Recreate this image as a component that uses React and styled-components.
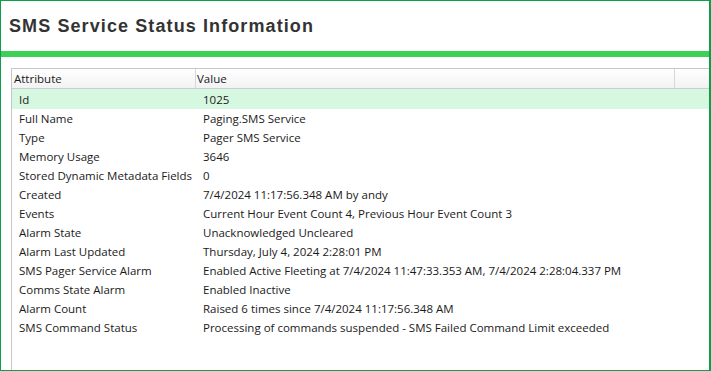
import React from "react";
import styled, { createGlobalStyle } from "styled-components";

const Global = createGlobalStyle`
  html, body {
    margin: 0;
    padding: 0;
    background: #fff;
  }
`;

const Window = styled.div`
  width: 711px;
  height: 371px;
  box-sizing: border-box;
  border: 1px solid #0aa04a;
  border-right-width: 2px;
  background: #fff;
  display: flex;
  flex-direction: column;
  overflow: hidden;
`;

const Header = styled.div`
  height: 50px;
  box-sizing: border-box;
  padding: 15px 0 0 8px;
`;

const Title = styled.h1`
  margin: 0;
  font-family: "Liberation Sans", Arial, sans-serif;
  font-size: 18px;
  line-height: 20px;
  font-weight: bold;
  letter-spacing: 1.1px;
  color: #333;
`;

const Bar = styled.div`
  height: 6px;
  background: #3ecf57;
`;

const Table = styled.div`
  flex: 1;
  margin: 11px 0 0 10px;
  border-top: 1px solid #c6c6ca;
  border-left: 1px solid #c6c6ca;
  font-family: "Open Sans", "Noto Sans", sans-serif;
  font-size: 11.5px;
  color: #1a1a1a;
`;

const HeadRow = styled.div`
  display: grid;
  grid-template-columns: 184px 479px 1fr;
  height: 20px;
  box-sizing: border-box;
  border-bottom: 1px solid #cdcdd1;
  background: linear-gradient(#ffffff, #f2f2f4);
`;

const HeadCell = styled.div`
  display: flex;
  align-items: center;
  padding-left: ${(p) => p.$pad || 2}px;
  border-right: ${(p) => (p.$last ? "none" : "1px solid #d8d8dc")};
`;

const Row = styled.div`
  display: grid;
  grid-template-columns: 184px 1fr;
  height: ${(p) => (p.$selected ? 20 : 19)}px;
  background: ${(p) => (p.$selected ? "#d6f8e0" : "transparent")};
`;

const Cell = styled.div`
  display: flex;
  align-items: center;
  padding-left: 7px;
  white-space: nowrap;
`;

const rows = [
  ["Id", "1025"],
  ["Full Name", "Paging.SMS Service"],
  ["Type", "Pager SMS Service"],
  ["Memory Usage", "3646"],
  ["Stored Dynamic Metadata Fields", "0"],
  ["Created", "7/4/2024 11:17:56.348 AM by andy"],
  ["Events", "Current Hour Event Count 4, Previous Hour Event Count 3"],
  ["Alarm State", "Unacknowledged Uncleared"],
  ["Alarm Last Updated", "Thursday, July 4, 2024 2:28:01 PM"],
  [
    "SMS Pager Service Alarm",
    "Enabled Active Fleeting at 7/4/2024 11:47:33.353 AM, 7/4/2024 2:28:04.337 PM",
  ],
  ["Comms State Alarm", "Enabled Inactive"],
  ["Alarm Count", "Raised 6 times since 7/4/2024 11:17:56.348 AM"],
  [
    "SMS Command Status",
    "Processing of commands suspended - SMS Failed Command Limit exceeded",
  ],
];

const App = () => (
  <>
    <Global />
    <Window>
      <Header>
        <Title>SMS Service Status Information</Title>
      </Header>
      <Bar />
      <Table>
        <HeadRow>
          <HeadCell>Attribute</HeadCell>
          <HeadCell $pad={1}>Value</HeadCell>
          <HeadCell $last />
        </HeadRow>
        {rows.map(([k, v], i) => (
          <Row key={k} $selected={i === 0}>
            <Cell>{k}</Cell>
            <Cell>{v}</Cell>
          </Row>
        ))}
      </Table>
    </Window>
  </>
);

export default App;
